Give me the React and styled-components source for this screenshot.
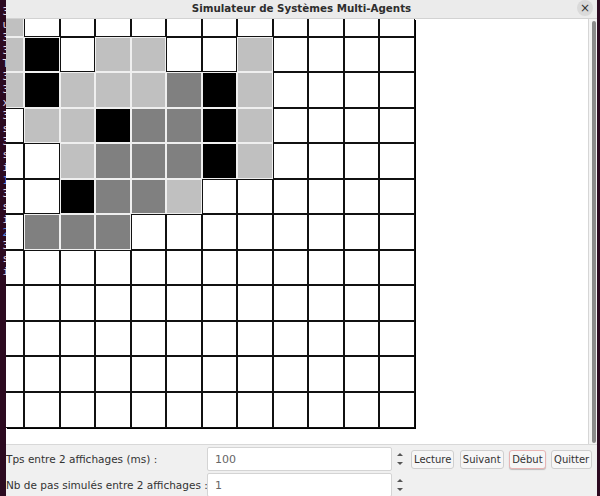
import React from 'react';
import styled, { createGlobalStyle } from 'styled-components';

const GlobalStyle = createGlobalStyle`
  html, body {
    margin: 0;
    padding: 0;
    height: 100%;
    overflow: hidden;
    background: #2c0a20;
  }
  #root {
    height: 100%;
  }
`;

// 0 = vide, 1 = gris clair, 2 = gris, 3 = noir
const grid = [
  [1, 0, 0, 0, 0, 0, 0, 0, 0, 0, 0, 0],
  [1, 3, 0, 1, 1, 0, 0, 1, 0, 0, 0, 0],
  [1, 3, 1, 1, 1, 2, 3, 1, 0, 0, 0, 0],
  [0, 1, 1, 3, 2, 2, 3, 1, 0, 0, 0, 0],
  [0, 0, 1, 2, 2, 2, 3, 1, 0, 0, 0, 0],
  [0, 0, 3, 2, 2, 1, 0, 0, 0, 0, 0, 0],
  [0, 2, 2, 2, 0, 0, 0, 0, 0, 0, 0, 0],
  [0, 0, 0, 0, 0, 0, 0, 0, 0, 0, 0, 0],
  [0, 0, 0, 0, 0, 0, 0, 0, 0, 0, 0, 0],
  [0, 0, 0, 0, 0, 0, 0, 0, 0, 0, 0, 0],
  [0, 0, 0, 0, 0, 0, 0, 0, 0, 0, 0, 0],
  [0, 0, 0, 0, 0, 0, 0, 0, 0, 0, 0, 0],
];

const fills = ['#ffffff', '#c0c0c0', '#808080', '#000000'];

const termLines = [
  ['3'], ['u'], ['3'], ['3'], ['T'], ['3'], ['3'], ['x'], ['3'], ['s'], ['3'],
  ['s'], ['i'], ['1', true], ['3'], ['s'], ['i'], ['2', true], ['3'], ['s'], ['i'],
];

const App = () => {
  return (
    <>
      <GlobalStyle />
      <Desktop>
        <Terminal>
          {termLines.map(([c, blue], i) => (
            <TermLine key={i} $blue={blue}>
              {c}
            </TermLine>
          ))}
        </Terminal>
        <Window>
          <TitleBar>
            <span />
            <Title>Simulateur de Systèmes Multi-Agents</Title>
            <CloseButton>×</CloseButton>
          </TitleBar>
          <Body>
            <Canvas>
              <Board>
                {grid.map((row, r) =>
                  row.map((v, c) => (
                    <Cell key={r + '-' + c} $v={v} $top={r === 0} $left={c === 0} />
                  ))
                )}
              </Board>
            </Canvas>
            <Track>
              <Thumb />
            </Track>
          </Body>
          <Controls>
            <Label>Tps entre 2 affichages (ms) :</Label>
            <Field>100</Field>
            <Spinner>
              <Arrow $up />
              <Arrow />
            </Spinner>
            <Buttons>
              <Button>Lecture</Button>
              <Button>Suivant</Button>
              <Button $focus>Début</Button>
              <Button>Quitter</Button>
            </Buttons>
            <Label>Nb de pas simulés entre 2 affichages :</Label>
            <Field>1</Field>
            <Spinner>
              <Arrow $up />
              <Arrow />
            </Spinner>
            <span />
          </Controls>
        </Window>
        <Edge />
      </Desktop>
    </>
  );
};

export default App;

const Desktop = styled.div`
  display: flex;
  height: 496px;
  width: 600px;
  background: #2c0a20;
`;

const Terminal = styled.div`
  flex: 0 0 6px;
  display: flex;
  flex-direction: column;
  padding-top: 5px;
  overflow: hidden;
`;

const TermLine = styled.div`
  display: flex;
  justify-content: flex-end;
  overflow: hidden;
  height: 13px;
  line-height: 13px;
  margin-right: -3px;
  font-family: "DejaVu Sans Mono", monospace;
  font-size: 11px;
  white-space: nowrap;
  color: ${(p) => (p.$blue ? '#5a8ae0' : '#e6d6e0')};
`;

const Edge = styled.div`
  flex: 0 0 3px;
`;

const Window = styled.div`
  flex: 1;
  min-width: 0;
  display: flex;
  flex-direction: column;
  background: #f0f0f0;
  font-family: "DejaVu Sans", sans-serif;
`;

const TitleBar = styled.div`
  height: 19px;
  box-sizing: border-box;
  padding-bottom: 7px;
  border-bottom: 1px solid #d2d2d2;
  background: #ebebeb;
  display: grid;
  grid-template-columns: 1fr auto 1fr;
  align-items: center;
`;

const Title = styled.div`
  font-size: 10.3px;
  font-weight: bold;
  color: #2e2e2e;
  line-height: 12px;
`;

const CloseButton = styled.div`
  justify-self: end;
  margin-right: 4px;
  width: 16px;
  height: 16px;
  border-radius: 50%;
  background: #dadada;
  color: #333;
  font-size: 12px;
  line-height: 16px;
  text-align: center;
`;

const Body = styled.div`
  flex: 1;
  min-height: 0;
  display: flex;
  border-bottom: 1px solid #d8d8d8;
`;

const Canvas = styled.div`
  flex: 1;
  min-width: 0;
  background: #ffffff;
  overflow: hidden;
`;

const Board = styled.div`
  display: grid;
  width: max-content;
  grid-template-columns: 18px repeat(5, 36px 35px) 36px;
  grid-template-rows: 18px repeat(5, 35px 36px) 36px;
  box-shadow: 1px 1px 0 #000;
`;

const Cell = styled.div`
  background: ${(p) => fills[p.$v]};
  ${(p) => {
    const c = p.$v === 0 ? '#111' : '#efefef';
    const parts = [`inset -1px 0 0 ${c}`, `inset 0 -1px 0 ${c}`];
    if (!p.$left) parts.push(`inset 1px 0 0 ${c}`);
    if (!p.$top) parts.push(`inset 0 1px 0 ${c}`);
    return `box-shadow: ${parts.join(', ')};`;
  }}
`;

const Track = styled.div`
  flex: 0 0 auto;
  width: 4px;
  padding: 2px 1px 1px 3px;
  border-left: 1px solid #d6d6d6;
  background: #f4f4f4;
  display: flex;
`;

const Thumb = styled.div`
  flex: 1;
  border-radius: 2px;
  background: #8a8a8a;
`;

const Controls = styled.div`
  flex: 0 0 51px;
  box-sizing: border-box;
  padding-top: 2px;
  display: grid;
  grid-template-columns: 201px 185px 15px minmax(0, 1fr);
  grid-template-rows: 24px 24px;
  row-gap: 2px;
  align-items: center;
  overflow: hidden;
  color: #333;
  font-size: 10.5px;
`;

const Label = styled.div`
  white-space: nowrap;
`;

const Field = styled.div`
  align-self: stretch;
  box-sizing: border-box;
  background: #ffffff;
  border: 1px solid #d4d4d4;
  border-radius: 2px;
  padding-left: 7px;
  display: flex;
  align-items: center;
  color: #666;
  font-size: 11px;
`;

const Spinner = styled.div`
  align-self: stretch;
  display: flex;
  flex-direction: column;
  justify-content: space-around;
  align-items: center;
  padding: 3px 0;
`;

const Arrow = styled.div`
  width: 0;
  height: 0;
  border-left: 3px solid transparent;
  border-right: 3px solid transparent;
  ${(p) => (p.$up ? 'border-bottom: 3px solid #555;' : 'border-top: 3px solid #555;')}
`;

const Buttons = styled.div`
  display: flex;
  gap: 5.5px;
  padding-left: 4px;
`;

const Button = styled.div`
  height: 19px;
  box-sizing: border-box;
  padding: 0 2px;
  display: flex;
  align-items: center;
  border: 1px solid ${(p) => (p.$focus ? '#e8b4b4' : '#cfcfcf')};
  border-radius: 3px;
  background: #f6f6f6;
  color: #333;
  font-size: 10px;
  white-space: nowrap;
  box-shadow: ${(p) => (p.$focus ? '0 1px 1px #bbb' : 'none')};
`;
